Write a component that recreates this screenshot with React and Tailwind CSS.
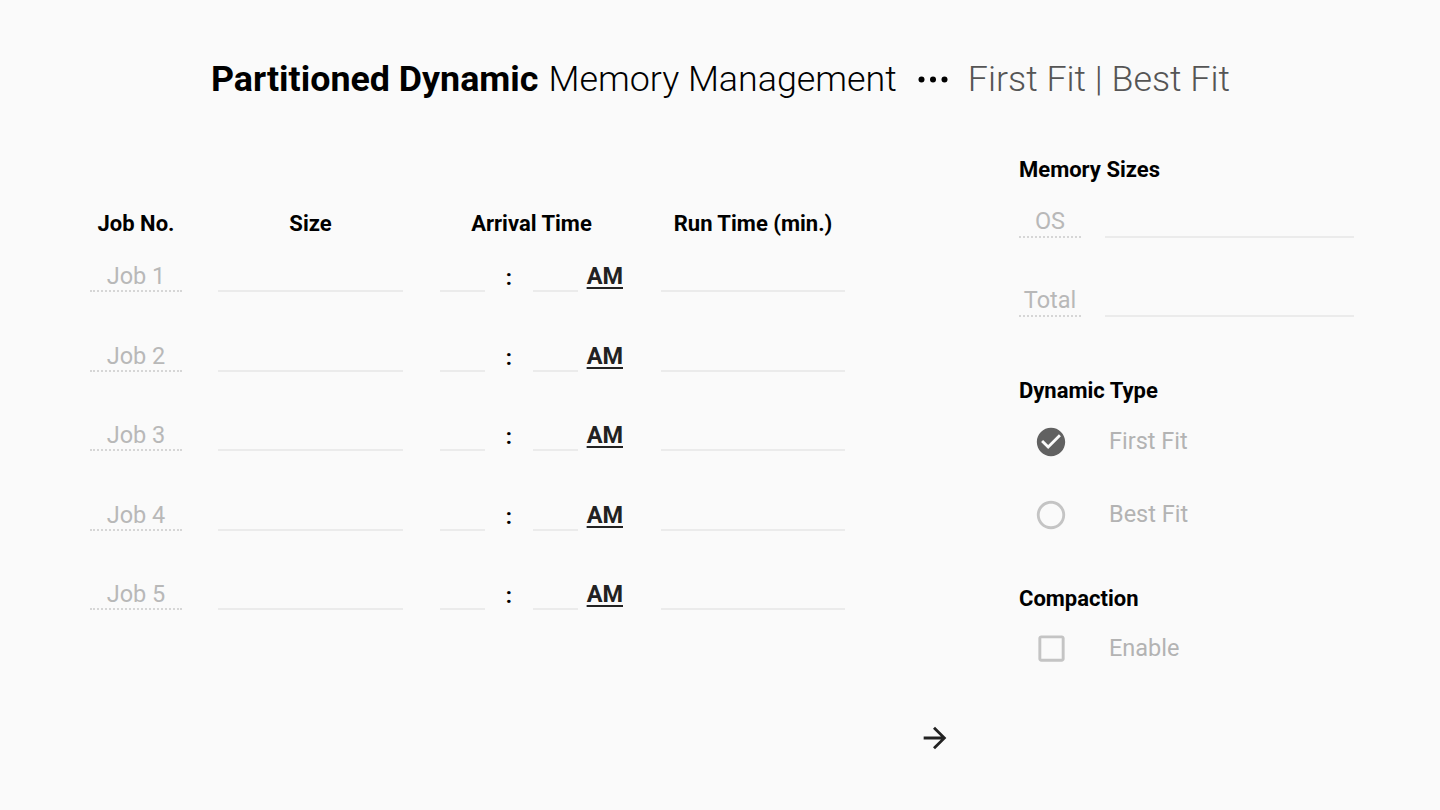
import React, { useState } from "react";

const jobs = ["Job 1", "Job 2", "Job 3", "Job 4", "Job 5"];

const Icon = ({ d, className }) => (
  <svg viewBox="0 0 24 24" className={className} fill="currentColor">
    <path d={d} />
  </svg>
);

const CHECK_CIRCLE =
  "M12 2C6.48 2 2 6.48 2 12s4.48 10 10 10 10-4.48 10-10S17.52 2 12 2zm-2 15l-5-5 1.41-1.41L10 14.17l7.59-7.59L19 8l-9 9z";
const RADIO_OFF =
  "M12 2C6.48 2 2 6.48 2 12s4.48 10 10 10 10-4.48 10-10S17.52 2 12 2zm0 18c-4.42 0-8-3.58-8-8s3.58-8 8-8 8 3.58 8 8-3.58 8-8 8z";
const BOX_OFF =
  "M19 5v14H5V5h14m0-2H5c-1.1 0-2 .9-2 2v14c0 1.1.9 2 2 2h14c1.1 0 2-.9 2-2V5c0-1.1-.9-2-2-2z";
const ARROW =
  "M12 4l-1.41 1.41L16.17 11H4v2h12.17l-5.58 5.59L12 20l8-8z";

const Line = ({ className }) => (
  <div className={`h-[40px] border-b-2 border-[#ebebeb] ${className}`} />
);

const App = () => {
  const [fit, setFit] = useState("first");

  return (
    <div className="min-h-screen bg-[#fafafa] text-black font-['Roboto',sans-serif]">
      {/* Title */}
      <h1 className="pt-[57px] flex items-center justify-center text-[35.8px] leading-[44px] pl-[1px]">
        <span className="font-bold">Partitioned Dynamic</span>
        <span className="font-light ml-[10px]">Memory Management</span>
        <svg viewBox="0 0 30 7" className="w-[30px] h-[7px] ml-[21px] mr-[20px]">
          <circle cx="3.5" cy="3.5" r="3" fill="black" />
          <circle cx="15" cy="3.5" r="3" fill="black" />
          <circle cx="26.5" cy="3.5" r="3" fill="black" />
        </svg>
        <span className="font-light text-[#555]">First Fit | Best Fit</span>
      </h1>

      <div className="flex mt-[48px]">
        {/* Jobs table */}
        <div className="ml-[90px] mt-[63px]">
          <div className="flex text-[22px] font-bold leading-[24px]">
            <div className="w-[92px] text-center whitespace-nowrap">Job No.</div>
            <div className="w-[185px] ml-[36px] text-center">Size</div>
            <div className="w-[183px] ml-[37px] text-center whitespace-nowrap">Arrival Time</div>
            <div className="w-[184px] ml-[38px] text-center whitespace-nowrap">Run Time (min.)</div>
          </div>

          <div className="mt-[16px] flex flex-col gap-[39.5px]">
            {jobs.map((job) => (
              <div key={job} className="flex items-end text-[23.5px] leading-[24px]">
                <div className="w-[92px] h-[40px] pt-[12px] border-b-2 border-dotted border-[#d6d6d6] text-center text-[#b8b8b8]">
                  {job}
                </div>
                <Line className="w-[185px] ml-[36px]" />
                <div className="ml-[37px] flex items-end w-[183px]">
                  <Line className="w-[45px]" />
                  <div className="w-[48px] h-[40px] pt-[14px] text-center font-bold text-[22px]">:</div>
                  <Line className="w-[45px]" />
                  <div className="ml-[9px] h-[40px] pt-[12px] font-bold underline underline-offset-[3px] text-[23.5px] text-[#222]">
                    AM
                  </div>
                </div>
                <Line className="w-[184px] ml-[38px]" />
              </div>
            ))}
          </div>
        </div>

        {/* Settings */}
        <div className="ml-[174px] w-[335px] mt-[9px]">
          <h2 className="text-[22px] font-bold leading-[24px]">Memory Sizes</h2>
          <div className="mt-[16px] flex flex-col gap-[39px]">
            {["OS", "Total"].map((label) => (
              <div key={label} className="flex items-end text-[23.5px] leading-[24px]">
                <div className="w-[62px] h-[40px] pt-[11px] border-b-2 border-dotted border-[#d6d6d6] text-center text-[#b8b8b8]">
                  {label}
                </div>
                <Line className="w-[249px] ml-[24px]" />
              </div>
            ))}
          </div>

          <h2 className="mt-[62px] text-[22px] font-bold leading-[24px]">Dynamic Type</h2>
          <div className="mt-[21px] flex flex-col gap-[38px] text-[23.5px] text-[#b3b3b3]">
            <button
              type="button"
              onClick={() => setFit("first")}
              className="flex items-center text-left"
            >
              <Icon
                d={fit === "first" ? CHECK_CIRCLE : RADIO_OFF}
                className={`w-[34px] h-[34px] ml-[15px] ${fit === "first" ? "text-[#616161]" : "text-[#c4c4c4]"}`}
              />
              <span className="ml-[41px]">First Fit</span>
            </button>
            <button
              type="button"
              onClick={() => setFit("best")}
              className="flex items-center text-left"
            >
              <Icon
                d={fit === "best" ? CHECK_CIRCLE : RADIO_OFF}
                className={`w-[34px] h-[34px] ml-[15px] ${fit === "best" ? "text-[#616161]" : "text-[#c4c4c4]"}`}
              />
              <span className="ml-[41px]">Best Fit</span>
            </button>
          </div>

          <h2 className="mt-[54px] text-[22px] font-bold leading-[24px]">Compaction</h2>
          <div className="mt-[20px] flex items-center text-[23.5px] text-[#b3b3b3]">
            <Icon d={BOX_OFF} className="w-[35px] h-[35px] ml-[15px] text-[#c4c4c4]" />
            <span className="ml-[40px]">Enable</span>
          </div>
        </div>
      </div>

      <div className="mt-[55px] pl-[918px]">
        <Icon d={ARROW} className="w-[34px] h-[34px] text-[#222]" />
      </div>
    </div>
  );
};

export default App;
